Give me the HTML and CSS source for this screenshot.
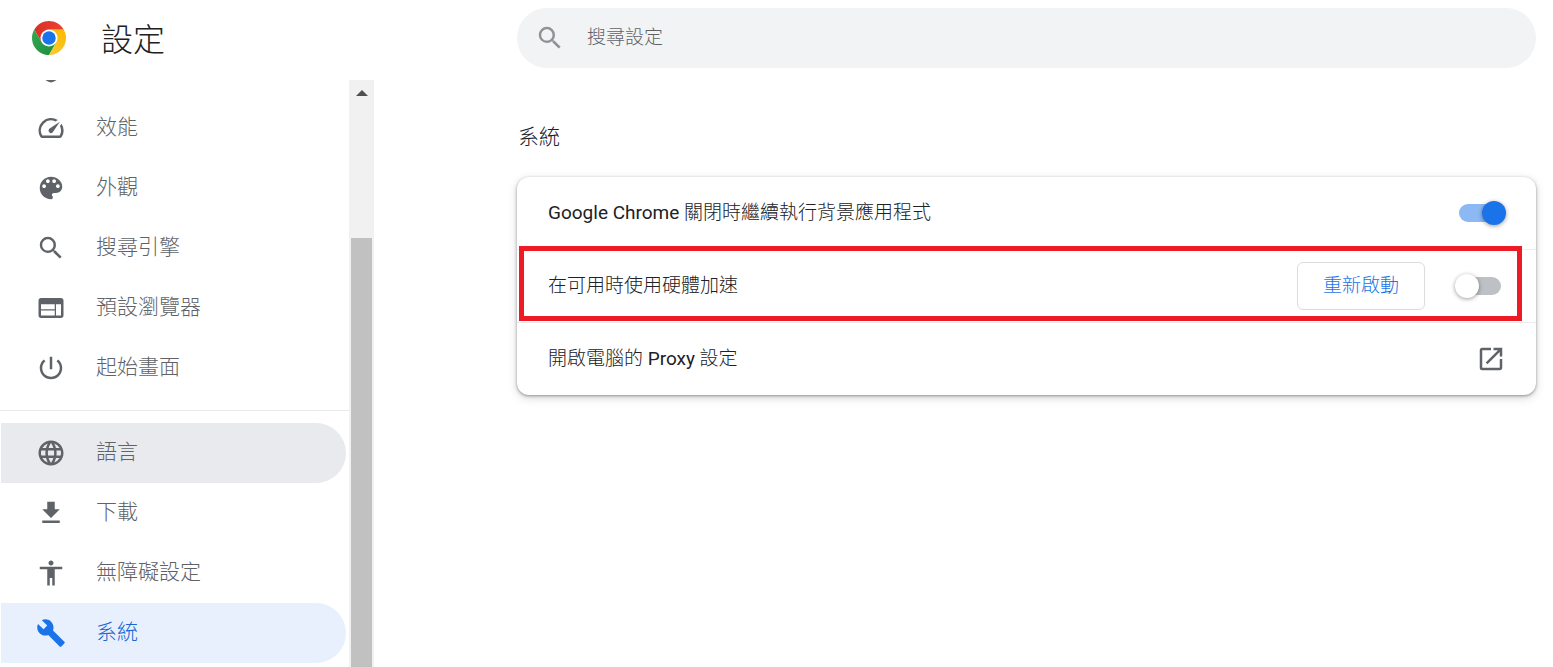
FILE: index.html
```html
<!DOCTYPE html>
<html lang="zh-Hant">
<head>
    <meta charset="UTF-8">
    <meta name="viewport" content="width=device-width, initial-scale=1.0">
    <title>設定</title>
    <link rel="stylesheet" href="styles.css">
</head>
<body>
    <!-- Toolbar -->
    <header class="toolbar">
        <div class="brand">
            <svg class="logo" viewBox="0 0 48 48" aria-hidden="true">
                <defs>
                    <linearGradient id="red" x1="0" y1="0" x2="1" y2="0"><stop offset="0" stop-color="#d93025"/><stop offset="1" stop-color="#ea4335"/></linearGradient>
                    <linearGradient id="yellow" x1="0" y1="1" x2="0.4" y2="0"><stop offset="0" stop-color="#fcc934"/><stop offset="1" stop-color="#fbbc04"/></linearGradient>
                    <linearGradient id="green" x1="1" y1="1" x2="0" y2="0"><stop offset="0" stop-color="#1e8e3e"/><stop offset="1" stop-color="#34a853"/></linearGradient>
                </defs>
                <circle cx="24" cy="24" r="12" fill="#fff"/>
                <path fill="url(#green)" d="M13.61 30 3.22 12A24 24 0 0 0 24 48l10.39-18A12 12 0 0 1 13.61 30z"/>
                <path fill="url(#yellow)" d="M34.39 30 24 48a24 24 0 0 0 20.78-36H24a12 12 0 0 1 10.39 18z"/>
                <path fill="url(#red)" d="M24 12h20.78a24 24 0 0 0-41.56 0l10.39 18A12 12 0 0 1 24 12z"/>
                <circle cx="24" cy="24" r="9.5" fill="#1a73e8"/>
            </svg>
            <h1>設定</h1>
        </div>
        <label class="search">
            <svg class="icon" viewBox="0 0 24 24" aria-hidden="true"><path d="M15.5 14h-.79l-.28-.27A6.47 6.47 0 0 0 16 9.5 6.5 6.5 0 1 0 9.5 16c1.61 0 3.09-.59 4.23-1.57l.27.28v.79l5 4.99L20.49 19l-4.99-5zm-6 0C7.01 14 5 11.99 5 9.5S7.01 5 9.5 5 14 7.01 14 9.5 11.99 14 9.5 14z"/></svg>
            <input type="search" placeholder="搜尋設定" aria-label="搜尋設定">
        </label>
    </header>

    <div class="content">
        <!-- Left menu -->
        <div class="sidebar">
            <nav class="menu">
                <div class="menu-cut">
                    <svg viewBox="0 0 30 3" aria-hidden="true"><path d="M9.5 0h11c-1.5 1.2-3.2 2-5.5 2.6C12.700 2 11 1.200 9.500 0z"/></svg>
                </div>
                <a class="item" href="#performance">
                    <svg class="icon" viewBox="0 0 24 24" aria-hidden="true"><path d="m20.38 8.57-1.23 1.85a8 8 0 0 1-.22 7.58H5.07A8 8 0 0 1 15.58 6.85l1.85-1.23A10 10 0 0 0 3.35 19a2 2 0 0 0 1.72 1h13.85a2 2 0 0 0 1.74-1 10 10 0 0 0-.27-10.44z"/><path d="M10.59 15.41a2 2 0 0 0 2.83 0l5.66-8.49-8.49 5.66a2 2 0 0 0 0 2.83z"/></svg>
                    <span>效能</span>
                </a>
                <a class="item" href="#appearance">
                    <svg class="icon" viewBox="0 0 24 24" aria-hidden="true"><path d="M12 3c-4.97 0-9 4.03-9 9s4.03 9 9 9c.83 0 1.5-.67 1.5-1.5 0-.39-.15-.74-.39-1.01-.23-.26-.38-.61-.38-.99 0-.83.67-1.5 1.5-1.5H16c2.76 0 5-2.24 5-5 0-4.42-4.03-8-9-8zm-5.5 9c-.83 0-1.5-.67-1.5-1.5S5.67 9 6.5 9 8 9.67 8 10.5 7.33 12 6.5 12zm3-4C8.67 8 8 7.33 8 6.5S8.67 5 9.5 5s1.5.67 1.5 1.5S10.33 8 9.5 8zm5 0c-.83 0-1.5-.67-1.5-1.5S13.67 5 14.5 5s1.5.67 1.5 1.5S15.33 8 14.5 8zm3 4c-.83 0-1.5-.67-1.5-1.5S16.67 9 17.5 9s1.5.67 1.5 1.5-.67 1.5-1.5 1.5z"/></svg>
                    <span>外觀</span>
                </a>
                <a class="item" href="#search">
                    <svg class="icon" viewBox="0 0 24 24" aria-hidden="true"><path d="M15.5 14h-.79l-.28-.27A6.47 6.47 0 0 0 16 9.5 6.5 6.5 0 1 0 9.5 16c1.61 0 3.09-.59 4.23-1.57l.27.28v.79l5 4.99L20.49 19l-4.99-5zm-6 0C7.01 14 5 11.99 5 9.5S7.01 5 9.5 5 14 7.01 14 9.5 11.99 14 9.5 14z"/></svg>
                    <span>搜尋引擎</span>
                </a>
                <a class="item" href="#default-browser">
                    <svg class="icon" viewBox="0 0 24 24" aria-hidden="true"><path d="M20 4H4c-1.1 0-1.99.9-1.99 2L2 18c0 1.1.9 2 2 2h16c1.1 0 2-.9 2-2V6c0-1.1-.9-2-2-2zm-5 14H4v-4h11v4zm0-5H4V9h11v4zm5 5h-4V9h4v9z"/></svg>
                    <span>預設瀏覽器</span>
                </a>
                <a class="item" href="#on-startup">
                    <svg class="icon" viewBox="0 0 24 24" aria-hidden="true"><path d="M13 3h-2v10h2V3zm4.83 2.17-1.42 1.42A6.92 6.92 0 0 1 19 12c0 3.87-3.13 7-7 7s-7-3.13-7-7c0-2.19 1.01-4.14 2.58-5.42L6.17 5.17A8.93 8.93 0 0 0 3 12a9 9 0 0 0 18 0c0-2.74-1.23-5.18-3.17-6.83z"/></svg>
                    <span>起始畫面</span>
                </a>
                <hr>
                <a class="item hovered" href="#languages">
                    <svg class="icon" viewBox="0 0 24 24" aria-hidden="true"><path d="M11.99 2C6.47 2 2 6.48 2 12s4.47 10 9.99 10C17.52 22 22 17.52 22 12S17.52 2 11.99 2zm6.93 6h-2.95a15.65 15.65 0 0 0-1.38-3.56A8.03 8.03 0 0 1 18.92 8zM12 4.04c.83 1.2 1.48 2.53 1.91 3.96h-3.82c.43-1.43 1.08-2.76 1.91-3.96zM4.26 14C4.1 13.36 4 12.69 4 12s.1-1.36.26-2h3.38c-.08.66-.14 1.32-.14 2s.06 1.34.14 2H4.26zm.82 2h2.95c.32 1.25.78 2.45 1.38 3.56A7.99 7.99 0 0 1 5.08 16zm2.95-8H5.08a7.99 7.99 0 0 1 4.33-3.56A15.65 15.65 0 0 0 8.03 8zM12 19.96c-.83-1.2-1.48-2.53-1.91-3.96h3.82c-.43 1.43-1.08 2.76-1.91 3.96zM14.34 14H9.66c-.09-.66-.16-1.32-.16-2s.07-1.35.16-2h4.68c.09.65.16 1.32.16 2s-.07 1.34-.16 2zm.25 5.56c.6-1.11 1.06-2.31 1.38-3.56h2.95a8.03 8.03 0 0 1-4.33 3.56zM16.36 14c.08-.66.14-1.32.14-2s-.06-1.34-.14-2h3.38c.16.64.26 1.31.26 2s-.1 1.36-.26 2h-3.38z"/></svg>
                    <span>語言</span>
                </a>
                <a class="item" href="#downloads">
                    <svg class="icon" viewBox="0 0 24 24" aria-hidden="true"><path d="M19 9h-4V3H9v6H5l7 7 7-7zM5 18v2h14v-2H5z"/></svg>
                    <span>下載</span>
                </a>
                <a class="item" href="#accessibility">
                    <svg class="icon" viewBox="0 0 24 24" aria-hidden="true"><path d="M12 2c1.1 0 2 .9 2 2s-.9 2-2 2-2-.9-2-2 .9-2 2-2zm9 7h-6v13h-2v-6h-2v6H9V9H3V7h18v2z"/></svg>
                    <span>無障礙設定</span>
                </a>
                <a class="item selected" href="#system" aria-current="page">
                    <svg class="icon" viewBox="0 0 24 24" aria-hidden="true"><path d="m22.7 19-9.1-9.1c.9-2.3.4-5-1.5-6.9-2-2-5-2.4-7.4-1.3L9 6 6 9 1.6 4.7C.4 7.1.9 10.1 2.9 12.1c1.9 1.9 4.6 2.4 6.9 1.5l9.1 9.1c.4.4 1 .4 1.4 0l2.3-2.3c.5-.4.5-1.1.1-1.4z"/></svg>
                    <span>系統</span>
                </a>
            </nav>
            <div class="scrollbar" aria-hidden="true">
                <svg class="scroll-up" viewBox="0 0 12 6"><path d="M6 0l6 6H0z"/></svg>
                <div class="thumb"></div>
            </div>
        </div>

        <!-- System section -->
        <main class="main">
            <h2>系統</h2>
            <section class="card">
                <div class="row">
                    <label class="text" for="background"><span class="latin">Google Chrome</span> 關閉時繼續執行背景應用程式</label>
                    <input class="toggle" type="checkbox" id="background" checked>
                </div>
                <div class="row marked">
                    <label class="text" for="hardware">在可用時使用硬體加速</label>
                    <button class="restart" type="button">重新啟動</button>
                    <input class="toggle" type="checkbox" id="hardware">
                </div>
                <a class="row" href="#proxy">
                    <span class="text">開啟電腦的 <span class="latin">Proxy</span> 設定</span>
                    <svg class="icon" viewBox="0 0 24 24" aria-hidden="true"><path d="M19 19H5V5h7V3H5a2 2 0 0 0-2 2v14a2 2 0 0 0 2 2h14c1.1 0 2-.9 2-2v-7h-2v7zM14 3v2h3.59l-9.83 9.83 1.41 1.41L19 6.41V10h2V3h-7z"/></svg>
                </a>
            </section>
        </main>
    </div>
</body>
</html>
```
FILE: styles.css
```css
* {
    box-sizing: border-box;
}

body {
    font-family: Roboto, "Noto Sans CJK TC", sans-serif;
    font-size: 19px;
    font-weight: 300;
    color: #202124;
    background-color: #fff;
    display: flex;
    flex-direction: column;
    height: 100vh;
    margin: 0;
    overflow: hidden;
}

h1, h2 {
    margin: 0;
    font-weight: 300;
}

a {
    color: inherit;
    text-decoration: none;
}

.icon {
    width: 30px;
    height: 30px;
    flex-shrink: 0;
    fill: #5f6368;
}

/* Toolbar */
.toolbar {
    display: flex;
    padding: 8px 17px 12px 0;
}

.brand {
    display: flex;
    align-items: center;
    gap: 35px;
    width: 517px;
    height: 60px;
    padding-left: 32px;
    flex-shrink: 0;
}

.logo {
    width: 34px;
    height: 34px;
}

h1 {
    padding-top: 4px;
    font-size: 32px;
    line-height: 40px;
}

.search {
    display: flex;
    align-items: center;
    gap: 22px;
    flex: 1;
    height: 60px;
    padding: 0 18px;
    border-radius: 30px;
    background-color: #f1f3f4;
}

.search .icon {
    fill: #8f9194;
}

.search input {
    flex: 1;
    min-width: 0;
    padding: 0 0 2px;
    border: none;
    outline: none;
    background: none;
    font: inherit;
}

.search input::placeholder {
    color: #5f6368;
}

/* Left menu */
.content {
    display: flex;
    flex: 1;
    min-height: 0;
}

.sidebar {
    display: flex;
    width: 374px;
    flex-shrink: 0;
}

.menu {
    flex: 1;
    overflow: hidden;
}

.menu-cut {
    height: 18px;
    padding-left: 36px;
}

.menu-cut svg {
    display: block;
    width: 30px;
    height: 3px;
    fill: #5f6368;
}

.item {
    display: flex;
    align-items: center;
    gap: 30px;
    height: 60px;
    margin: 0 3px 0 1px;
    padding-left: 35px;
    border-radius: 0 30px 30px 0;
    font-size: 21px;
    color: #5f6368;
}

.item span {
    padding-bottom: 6px;
}

.item.hovered {
    background-color: #e8eaed;
}

.item.selected {
    background-color: #e8f0fe;
    color: #1967d2;
}

.item.selected .icon {
    fill: #1a73e8;
}

hr {
    height: 1px;
    margin: 12px 0;
    border: none;
    background-color: #e8eaed;
}

.scrollbar {
    display: flex;
    flex-direction: column;
    width: 25px;
    padding: 10px 2px 0;
    background-color: #f1f1f1;
}

.scroll-up {
    width: 12px;
    height: 6px;
    align-self: center;
    fill: #505050;
}

.thumb {
    flex: 1;
    margin-top: 142px;
    background-color: #c1c1c1;
}

/* System section */
.main {
    flex: 1;
    padding: 42px 17px 0 143px;
}

h2 {
    padding-left: 1px;
    font-size: 21px;
    line-height: 30px;
}

.card {
    margin-top: 25px;
    border-radius: 12px;
    box-shadow: 0 1px 3px rgba(60, 64, 67, 0.5), 0 3px 10px rgba(60, 64, 67, 0.2);
}

.row {
    display: flex;
    align-items: center;
    gap: 30px;
    height: 72px;
    padding: 0 30px 0 31px;
}

.row + .row {
    height: 73px;
    border-top: 1px solid #ececee;
}

.text {
    flex: 1;
    padding-bottom: 6px;
}

.latin {
    font-weight: 400;
}

.marked {
    position: relative;
}

/* Red frame round the highlighted setting */
.marked::after {
    content: "";
    position: absolute;
    top: -4px;
    right: 14px;
    bottom: 1px;
    left: 2px;
    border: 5px solid #ed1c24;
    pointer-events: none;
}

.restart {
    width: 128px;
    height: 48px;
    padding: 0 0 6px;
    border: 1px solid #dadce0;
    border-radius: 6px;
    background-color: #fff;
    font: inherit;
    color: #1a73e8;
}

.toggle {
    appearance: none;
    display: flex;
    align-items: center;
    width: 51px;
    height: 24px;
    margin: 0;
    position: relative;
}

.toggle::before {
    content: "";
    width: 42px;
    height: 18px;
    margin-left: 4px;
    border-radius: 9px;
    background-color: #bdc1c6;
}

.toggle::after {
    content: "";
    position: absolute;
    left: 0;
    width: 24px;
    height: 24px;
    border-radius: 50%;
    background-color: #fff;
    box-shadow: 0 1px 4px rgba(0, 0, 0, 0.4);
}

.toggle:checked::before {
    background-color: #8cb8f3;
}

.toggle:checked::after {
    left: 27px;
    background-color: #1a73e8;
}
```
